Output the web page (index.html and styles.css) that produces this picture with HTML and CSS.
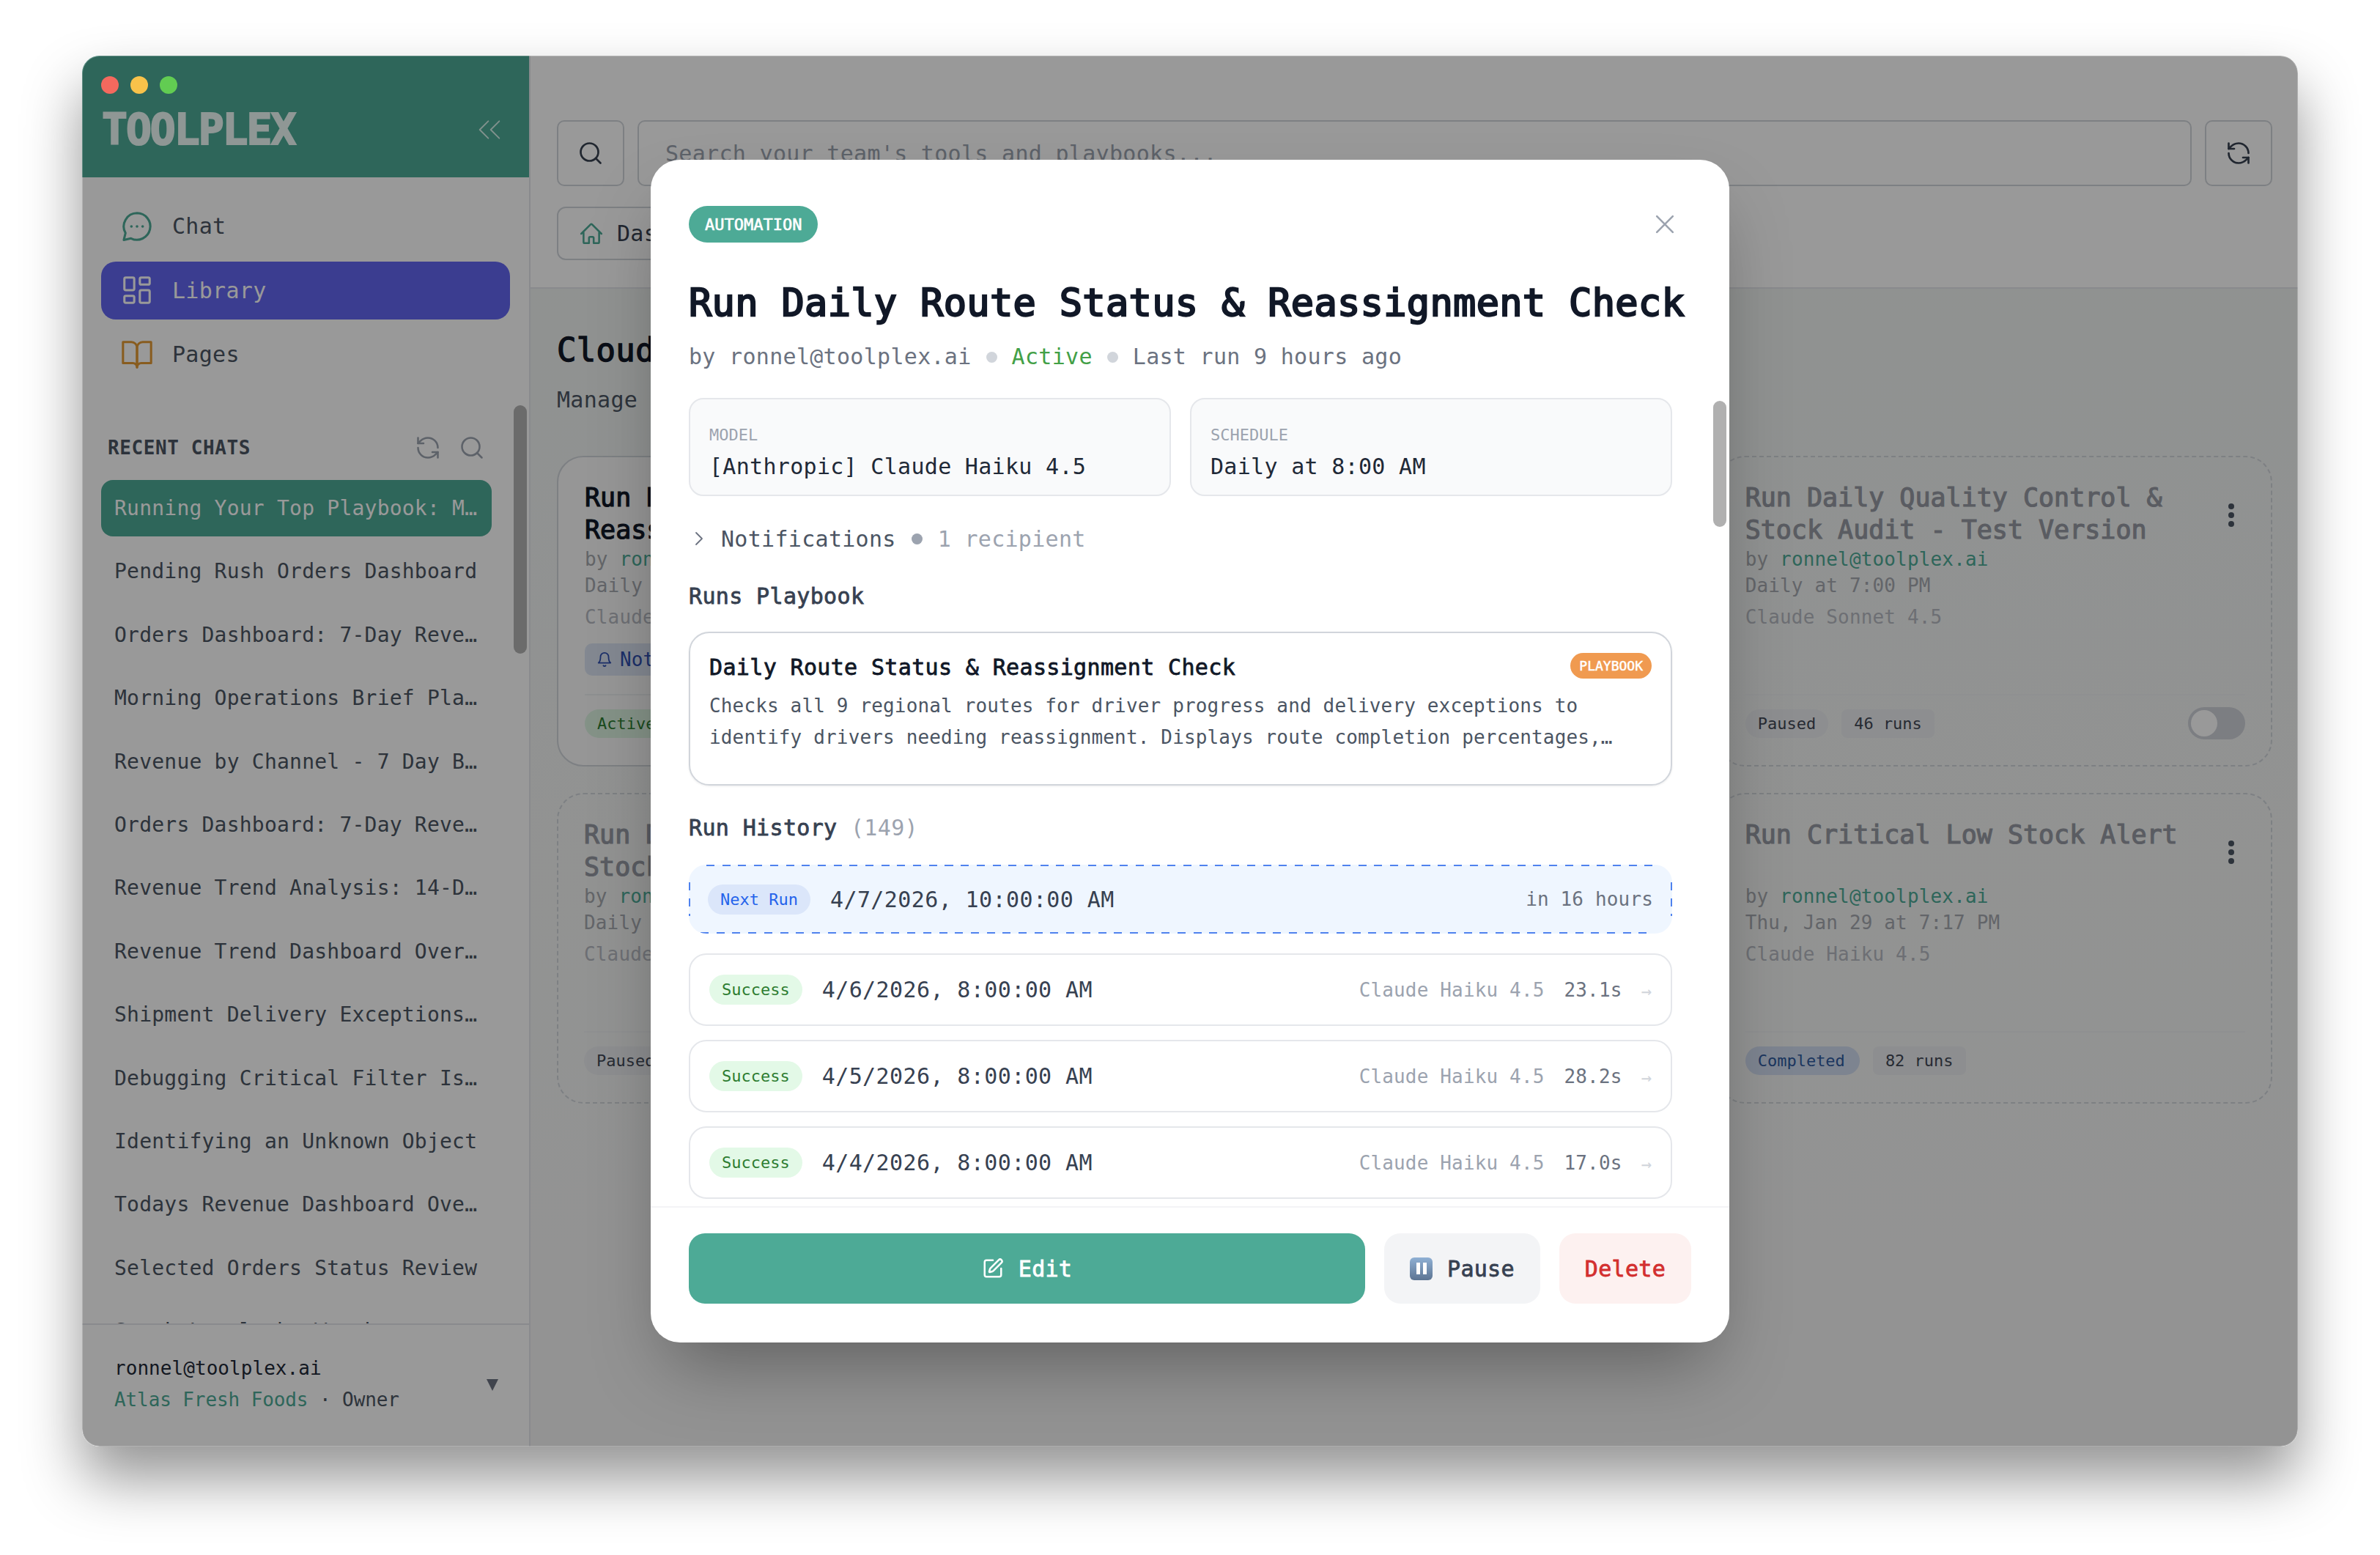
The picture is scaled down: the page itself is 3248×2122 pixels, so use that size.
FILE: index.html
```html
<!DOCTYPE html>
<html>
<head>
  <title>ToolPlex Library</title>
  <meta charset="UTF-8">
  <link rel="stylesheet" href="styles.css">
</head>

<body>
  <div class="window">
    <div class="traffic">
      <span class="light red"></span>
      <span class="light yellow"></span>
      <span class="light green"></span>
    </div>

    <aside class="sidebar">
      <div class="brand">
        <span class="logo">TOOLPLEX</span>
        <svg class="collapse" viewBox="0 0 24 24"><path d="m11 19-7-7 7-7"/><path d="m20 19-7-7 7-7"/></svg>
      </div>

      <nav class="nav">
        <a class="nav-item">
          <svg class="nav-icon teal" viewBox="0 0 24 24"><path d="M12 2.5a9.5 9.5 0 1 1-4.3 18L2.6 21.6l1.2-4.9A9.5 9.5 0 0 1 12 2.5z"/><path class="dots" d="M8 12h.01M12 12h.01M16 12h.01"/></svg>
          Chat
        </a>
        <a class="nav-item active">
          <svg class="nav-icon" viewBox="0 0 24 24"><rect x="3" y="3" width="7" height="9" rx="1"/><rect x="14" y="3" width="7" height="5" rx="1"/><rect x="14" y="12" width="7" height="9" rx="1"/><rect x="3" y="16" width="7" height="5" rx="1"/></svg>
          Library
        </a>
        <a class="nav-item">
          <svg class="nav-icon amber" viewBox="0 0 24 24"><path d="M2 3h6a4 4 0 0 1 4 4v14a3 3 0 0 0-3-3H2z"/><path d="M22 3h-6a4 4 0 0 0-4 4v14a3 3 0 0 1 3-3h7z"/></svg>
          Pages
        </a>
      </nav>

      <div class="recent-head">
        <span class="recent-title">RECENT CHATS</span>
        <span class="recent-tools">
          <svg class="small-icon refresh" viewBox="0 0 24 24"><path d="M21 12a9 9 0 0 0-9-9 9.75 9.75 0 0 0-6.74 2.74L3 8"/><path d="M3 3v5h5"/><path d="M3 12a9 9 0 0 0 9 9 9.75 9.75 0 0 0 6.74-2.74L21 16"/><path d="M16 16h5v5"/></svg>
          <svg class="small-icon" viewBox="0 0 24 24"><circle cx="11" cy="11" r="8"/><path d="m21 21-4.35-4.35"/></svg>
        </span>
      </div>

      <div class="chat-list">
        <div class="chat active">Running Your Top Playbook: M…</div>
        <div class="chat">Pending Rush Orders Dashboard</div>
        <div class="chat">Orders Dashboard: 7-Day Reve…</div>
        <div class="chat">Morning Operations Brief Pla…</div>
        <div class="chat">Revenue by Channel - 7 Day B…</div>
        <div class="chat">Orders Dashboard: 7-Day Reve…</div>
        <div class="chat">Revenue Trend Analysis: 14-D…</div>
        <div class="chat">Revenue Trend Dashboard Over…</div>
        <div class="chat">Shipment Delivery Exceptions…</div>
        <div class="chat">Debugging Critical Filter Is…</div>
        <div class="chat">Identifying an Unknown Object</div>
        <div class="chat">Todays Revenue Dashboard Ove…</div>
        <div class="chat">Selected Orders Status Review</div>
        <div class="chat">Stock Levels by Warehouse</div>
      </div>

      <div class="account">
        <div>
          <div class="account-mail">ronnel@toolplex.ai</div>
          <div class="account-org"><span class="org-name">Atlas Fresh Foods</span> · Owner</div>
        </div>
        <span class="caret"></span>
      </div>

      <div class="side-thumb"></div>
    </aside>

    <main class="main">
      <header class="topbar">
        <div class="search-row">
          <button class="icon-btn">
            <svg class="btn-icon" viewBox="0 0 24 24"><circle cx="11" cy="11" r="8"/><path d="m21 21-4.35-4.35"/></svg>
          </button>
          <input class="search" placeholder="Search your team's tools and playbooks...">
          <button class="icon-btn">
            <svg class="btn-icon" viewBox="0 0 24 24"><path d="M21 12a9 9 0 0 0-9-9 9.75 9.75 0 0 0-6.74 2.74L3 8"/><path d="M3 3v5h5"/><path d="M3 12a9 9 0 0 0 9 9 9.75 9.75 0 0 0 6.74-2.74L21 16"/><path d="M16 16h5v5"/></svg>
          </button>
        </div>
        <div class="tabs">
          <div class="tab">
            <svg class="tab-icon" viewBox="0 0 24 24"><path d="M2.25 12l8.954-8.955c.44-.439 1.152-.439 1.591 0L21.75 12M4.5 9.75v10.125c0 .621.504 1.125 1.125 1.125H9.75v-4.875c0-.621.504-1.125 1.125-1.125h2.25c.621 0 1.125.504 1.125 1.125V21h4.125c.621 0 1.125-.504 1.125-1.125V9.75"/></svg>
            Dashboard
          </div>
        </div>
      </header>

      <section class="content">
        <h1 class="page-title">Cloud Automations</h1>
        <p class="page-sub">Manage your scheduled automations</p>

        <div class="cards">
          <article class="card">
            <h3 class="card-title">Run Daily Route Status &amp; Reassignment Check</h3>
            <div class="card-by">by <span class="mail">ronnel@toolplex.ai</span></div>
            <div class="card-meta">Daily at 8:00 AM</div>
            <div class="card-meta model">Claude Haiku 4.5</div>
            <div class="notify">
              <svg class="bell" viewBox="0 0 24 24"><path d="M6 8a6 6 0 0 1 12 0c0 7 3 9 3 9H3s3-2 3-9"/><path d="M10.3 21a1.94 1.94 0 0 0 3.4 0"/></svg>
              Notifications
            </div>
            <div class="card-foot"><span class="chip chip-active">Active</span></div>
          </article>
          <article class="card"></article>
          <article class="card paused">
            <h3 class="card-title">Run Daily Quality Control &amp; Stock Audit - Test Version</h3>
            <span class="kebab"></span>
            <div class="card-by">by <span class="mail">ronnel@toolplex.ai</span></div>
            <div class="card-meta">Daily at 7:00 PM</div>
            <div class="card-meta model">Claude Sonnet 4.5</div>
            <div class="card-foot">
              <span class="chip">Paused</span>
              <span class="chip square">46 runs</span>
              <span class="toggle"><span class="knob"></span></span>
            </div>
          </article>

          <article class="card paused">
            <h3 class="card-title">Run Daily Quality Control &amp; Stock Audit</h3>
            <div class="card-by">by <span class="mail">ronnel@toolplex.ai</span></div>
            <div class="card-meta">Daily at 7:00 AM</div>
            <div class="card-meta model">Claude Haiku 4.5</div>
            <div class="card-foot"><span class="chip">Paused</span></div>
          </article>
          <article class="card paused"></article>
          <article class="card paused">
            <h3 class="card-title tall">Run Critical Low Stock Alert</h3>
            <span class="kebab"></span>
            <div class="card-by">by <span class="mail">ronnel@toolplex.ai</span></div>
            <div class="card-meta">Thu, Jan 29 at 7:17 PM</div>
            <div class="card-meta model">Claude Haiku 4.5</div>
            <div class="card-foot">
              <span class="chip chip-done">Completed</span>
              <span class="chip square">82 runs</span>
            </div>
          </article>
        </div>
      </section>
    </main>

    <div class="overlay">
      <div class="modal">
        <div class="modal-head">
          <div class="modal-top">
            <span class="type-badge">AUTOMATION</span>
            <svg class="close" viewBox="0 0 24 24"><path d="M2 2l20 20M22 2 2 22"/></svg>
          </div>
          <h2 class="modal-title">Run Daily Route Status &amp; Reassignment Check</h2>
          <div class="modal-sub">
            <span>by ronnel@toolplex.ai</span>
            <span class="dot"></span>
            <span class="status">Active</span>
            <span class="dot"></span>
            <span>Last run 9 hours ago</span>
          </div>
        </div>

        <div class="modal-body">
          <div class="info-grid">
            <div class="info-box">
              <div class="info-label">MODEL</div>
              <div class="info-value">[Anthropic] Claude Haiku 4.5</div>
            </div>
            <div class="info-box">
              <div class="info-label">SCHEDULE</div>
              <div class="info-value">Daily at 8:00 AM</div>
            </div>
          </div>

          <div class="notif-row">
            <svg class="chev" viewBox="0 0 12 20"><path d="M2 2l8 8-8 8"/></svg>
            <span class="notif-label">Notifications</span>
            <span class="dot dark"></span>
            <span class="notif-count">1 recipient</span>
          </div>

          <h4 class="section-title">Runs Playbook</h4>
          <div class="playbook">
            <div class="playbook-head">
              <span class="playbook-name">Daily Route Status &amp; Reassignment Check</span>
              <span class="playbook-badge">PLAYBOOK</span>
            </div>
            <p class="playbook-desc">Checks all 9 regional routes for driver progress and delivery exceptions to<br>identify drivers needing reassignment. Displays route completion percentages,…</p>
          </div>

          <h4 class="section-title history">Run History <span class="count">(149)</span></h4>

          <div class="run next">
            <span class="pill pill-next">Next Run</span>
            <span class="run-date">4/7/2026, 10:00:00 AM</span>
            <span class="run-eta">in 16 hours</span>
          </div>
          <div class="run">
            <span class="pill">Success</span>
            <span class="run-date">4/6/2026, 8:00:00 AM</span>
            <span class="run-model">Claude Haiku 4.5</span>
            <span class="run-time">23.1s</span>
            <span class="run-arrow">→</span>
          </div>
          <div class="run">
            <span class="pill">Success</span>
            <span class="run-date">4/5/2026, 8:00:00 AM</span>
            <span class="run-model">Claude Haiku 4.5</span>
            <span class="run-time">28.2s</span>
            <span class="run-arrow">→</span>
          </div>
          <div class="run">
            <span class="pill">Success</span>
            <span class="run-date">4/4/2026, 8:00:00 AM</span>
            <span class="run-model">Claude Haiku 4.5</span>
            <span class="run-time">17.0s</span>
            <span class="run-arrow">→</span>
          </div>
        </div>

        <div class="modal-thumb"></div>

        <div class="modal-foot">
          <button class="btn btn-edit">
            <svg class="edit-icon" viewBox="0 0 24 24"><path d="M12 3H5a2 2 0 0 0-2 2v14a2 2 0 0 0 2 2h14a2 2 0 0 0 2-2v-7"/><path d="M18.375 2.625a1 1 0 0 1 3 3l-9.013 9.014a2 2 0 0 1-.853.505l-2.873.84a.5.5 0 0 1-.62-.62l.84-2.873a2 2 0 0 1 .506-.852z"/></svg>
            Edit
          </button>
          <button class="btn btn-pause"><span class="pause-icon"><i></i><i></i></span>Pause</button>
          <button class="btn btn-delete">Delete</button>
        </div>
      </div>
    </div>
  </div>
</body>
</html>
```

FILE: styles.css
```css
* {
  box-sizing: border-box;
}
body {
  margin: 0;
  padding: 76px 112px 148px;
  background-color: #fff;
  font-family: "DejaVu Sans Mono", "Liberation Mono", monospace;
  font-size: 30px;
  letter-spacing: 0.3px;
  color: #1f2937;
}
svg {
  fill: none;
  stroke: currentColor;
  stroke-linecap: round;
  stroke-linejoin: round;
  stroke-width: 2;
  flex: none;
}
h1, h2, h3, h4, p {
  margin: 0;
}
button, input {
  font: inherit;
  letter-spacing: inherit;
}

.window {
  position: relative;
  display: flex;
  width: 3024px;
  height: 1898px;
  border-radius: 24px;
  overflow: hidden;
  background-color: #fff;
  box-shadow: 0 44px 80px rgba(0,0,0,0.42);
}

.traffic {
  position: absolute;
  top: 28px;
  left: 26px;
  z-index: 3;
  display: flex;
  gap: 16px;
}
.light {
  width: 24px;
  height: 24px;
  border-radius: 50%;
}
.red { background-color: #f4695e; }
.yellow { background-color: #f8c24a; }
.green { background-color: #62cc52; }

/* sidebar */
.sidebar {
  position: relative;
  display: flex;
  flex-direction: column;
  width: 612px;
  flex: none;
  border-right: 2px solid #e5e7eb;
  background-color: #fff;
}
.brand {
  display: flex;
  align-items: center;
  justify-content: space-between;
  height: 166px;
  padding: 36px 34px 0 27px;
  background-color: #4daa96;
}
.logo {
  font-size: 58px;
  font-weight: bold;
  letter-spacing: -2px;
  line-height: 58px;
  color: #eefcf8;
  -webkit-text-stroke: 2px #eefcf8;
}
.collapse {
  width: 40px;
  height: 40px;
  color: #d8f3ec;
  stroke-width: 1.1;
}
.nav {
  display: flex;
  flex-direction: column;
  gap: 8.5px;
  padding: 27px 26px 0;
}
.nav-item {
  display: flex;
  align-items: center;
  gap: 25px;
  height: 79px;
  padding-left: 26px;
  border-radius: 20px;
  color: #4b5563;
}
.nav-item.active {
  background-color: #6366f1;
  color: #fff;
}
.nav-icon {
  width: 46px;
  height: 46px;
  stroke-width: 1.6;
}
.nav-icon.teal { color: #4daa96; }
.nav-icon.amber { color: #e39a35; }
.nav-icon .dots {
  stroke-width: 1.9;
}
.recent-head {
  display: flex;
  align-items: center;
  justify-content: space-between;
  margin-top: 70px;
  padding: 0 60px 0 35px;
  height: 36px;
}
.recent-title {
  font-size: 26px;
  font-weight: bold;
  letter-spacing: 0.6px;
  color: #4b5563;
}
.recent-tools {
  display: flex;
  gap: 24px;
  align-items: center;
}
.small-icon {
  width: 36px;
  height: 36px;
  color: #9ca3af;
  stroke-width: 1.7;
}
.chat-list {
  flex: 1;
  min-height: 0;
  overflow: hidden;
  display: flex;
  flex-direction: column;
  gap: 9.4px;
  margin-top: 26px;
  padding: 0 51px 0 26px;
}
.chat {
  flex: none;
  height: 77px;
  line-height: 77px;
  padding-left: 18px;
  border-radius: 16px;
  font-size: 28px;
  letter-spacing: 0.22px;
  color: #4b5563;
  white-space: nowrap;
}
.chat.active {
  background-color: #4daa96;
  color: #fff;
}
.account {
  display: flex;
  align-items: center;
  justify-content: space-between;
  height: 168px;
  flex: none;
  padding: 0 42px 6px 44px;
  border-top: 2px solid #e5e7eb;
  font-size: 26px;
  line-height: 36px;
  letter-spacing: 0.05px;
}
.account-org {
  margin-top: 7px;
  color: #4b5563;
  letter-spacing: -0.1px;
}
.org-name {
  color: #4daa96;
}
.caret {
  width: 0;
  height: 0;
  margin-top: 4px;
  border-left: 8px solid transparent;
  border-right: 8px solid transparent;
  border-top: 16px solid #6b7280;
}
.side-thumb {
  position: absolute;
  top: 477px;
  left: 589px;
  width: 18px;
  height: 339px;
  border-radius: 9px;
  background-color: #b3b3b3;
}

/* main */
.main {
  display: flex;
  flex-direction: column;
  flex: 1;
  min-width: 0;
  background: linear-gradient(#eff3f1, #f6f6f6);
}
.topbar {
  padding: 88px 35px 37px 36px;
  border-bottom: 2px solid #e5e7eb;
  background-color: #fff;
}
.search-row {
  display: flex;
  gap: 18px;
}
.icon-btn {
  display: flex;
  align-items: center;
  justify-content: center;
  width: 92px;
  height: 90px;
  flex: none;
  padding: 0;
  border: 2px solid #d1d5db;
  border-radius: 10px;
  background-color: #fff;
  color: #374151;
}
.btn-icon {
  width: 36px;
  height: 36px;
  stroke-width: 1.8;
}
.search {
  flex: 1;
  min-width: 0;
  height: 90px;
  padding: 0 36px;
  border: 2px solid #d1d5db;
  border-radius: 10px;
}
.search::placeholder {
  color: #9ca3af;
}
.tabs {
  display: flex;
  margin-top: 28px;
}
.tab {
  display: flex;
  align-items: center;
  gap: 18px;
  height: 73px;
  padding: 0 28px;
  border: 2px solid #d1d5db;
  border-radius: 12px;
  color: #374151;
}
.tab-icon {
  width: 34px;
  height: 34px;
  color: #4daa96;
  stroke-width: 1.8;
}
.content {
  padding: 54px 35px 0 36px;
}
.page-title {
  font-size: 44px;
  line-height: 60px;
  font-weight: normal;
  -webkit-text-stroke: 1.4px #111827;
  color: #111827;
}
.page-sub {
  margin-top: 18px;
  line-height: 40px;
  color: #4b5563;
}
.cards {
  display: grid;
  grid-template-columns: repeat(3, 1fr);
  gap: 36px;
  margin-top: 56px;
}
.card {
  position: relative;
  display: flex;
  flex-direction: column;
  height: 424px;
  padding: 33px 35px 35px;
  border: 2px solid #d1d5db;
  border-radius: 36px;
  background-color: #fafbfb;
  font-size: 26px;
  letter-spacing: 0.15px;
}
.card:first-child {
  padding-left: 36px;
}
.card.paused {
  border-style: dashed;
  background-color: transparent;
}
.card-title {
  width: 640px;
  font-size: 35px;
  line-height: 44px;
  letter-spacing: 0;
  font-weight: normal;
  -webkit-text-stroke: 1.2px #111827;
  color: #111827;
}
.card-title.tall {
  min-height: 88px;
}
.paused .card-title {
  -webkit-text-stroke-color: #969aa3;
  color: #969aa3;
}
.card-by {
  line-height: 36px;
  color: #a5a8ad;
}
.mail {
  color: #4daa96;
}
.card-meta {
  line-height: 36px;
  color: #a5a8b0;
}
.card-meta.model {
  margin-top: 7px;
  color: #b6b9c1;
}
.notify {
  display: flex;
  align-items: center;
  gap: 10px;
  align-self: flex-start;
  height: 44px;
  margin-top: 18px;
  padding: 0 16px;
  border-radius: 10px;
  background-color: #dbe3f2;
  color: #2f4fb0;
  white-space: nowrap;
}
.bell {
  width: 22px;
  height: 22px;
}
.card-foot {
  display: flex;
  align-items: center;
  gap: 18px;
  min-height: 62px;
  margin-top: auto;
  padding-top: 16px;
  border-top: 2px solid #eceef0;
  font-size: 22px;
  letter-spacing: 0;
}
.paused .card-foot {
  border-top-color: #eef0f2;
}
.chip {
  display: flex;
  align-items: center;
  height: 39px;
  padding: 0 17px;
  border-radius: 20px;
  background-color: #ebedf0;
  color: #414956;
  white-space: nowrap;
}
.chip.square {
  border-radius: 8px;
}
.chip-active {
  background-color: #dcf3e2;
  color: #2e7d32;
}
.chip-done {
  padding-right: 20px;
  background-color: #d0dcf0;
  color: #2f5a9e;
}
.kebab {
  position: absolute;
  top: 63px;
  right: 50px;
  width: 8px;
  height: 8px;
  border-radius: 50%;
  background-color: #4b5563;
  box-shadow: 0 12px 0 #4b5563, 0 24px 0 #4b5563;
}
.toggle {
  display: flex;
  align-items: center;
  width: 78px;
  height: 44px;
  margin-left: auto;
  padding: 0 4px;
  border-radius: 22px;
  background-color: #cfd2d9;
}
.knob {
  width: 36px;
  height: 36px;
  border-radius: 50%;
  background-color: #fff;
}

/* modal */
.overlay {
  position: absolute;
  top: 0;
  left: 0;
  width: 100%;
  height: 100%;
  z-index: 2;
  display: flex;
  align-items: center;
  justify-content: center;
  background-color: rgba(0,0,0,0.4);
  box-shadow: inset 0 0 0 1px rgba(255,255,255,0.25);
  border-radius: 24px;
}
.modal {
  position: relative;
  display: flex;
  flex-direction: column;
  width: 1472px;
  height: 1614px;
  border-radius: 40px;
  background-color: #fff;
  box-shadow: 0 50px 100px -24px rgba(0,0,0,0.35);
  overflow: hidden;
}
.modal-head {
  flex: none;
  padding: 63px 52px 36px;
}
.modal-top {
  display: flex;
  align-items: center;
  justify-content: space-between;
  padding-right: 23px;
}
.type-badge {
  display: flex;
  align-items: center;
  height: 50px;
  padding: 0 22px;
  border-radius: 25px;
  background-color: #4daa96;
  color: #fff;
  font-size: 22px;
  letter-spacing: 0;
  -webkit-text-stroke: 0.6px #fff;
}
.close {
  width: 26px;
  height: 26px;
  color: #9ca3af;
  stroke-width: 2.4;
}
.modal-title {
  margin-top: 51px;
  font-size: 52px;
  line-height: 62px;
  letter-spacing: 0.3px;
  font-weight: normal;
  -webkit-text-stroke: 2.3px #111827;
  color: #111827;
  white-space: nowrap;
}
.modal-sub {
  display: flex;
  align-items: center;
  gap: 20px;
  margin-top: 23px;
  line-height: 40px;
  color: #6b7280;
}
.dot {
  width: 15px;
  height: 15px;
  border-radius: 50%;
  background-color: #d1d5db;
}
.dot.dark {
  background-color: #9ca3af;
}
.status {
  color: #43a047;
}
.modal-body {
  flex: 1;
  min-height: 0;
  overflow: hidden;
  padding: 0 78px 0 52px;
}
.info-grid {
  display: grid;
  grid-template-columns: 1fr 1fr;
  gap: 26px;
}
.info-box {
  height: 134px;
  padding: 35px 26px 0;
  border: 2px solid #e5e7eb;
  border-radius: 20px;
  background-color: #f9fafb;
}
.info-label {
  font-size: 22px;
  line-height: 28px;
  letter-spacing: 0;
  color: #9ca3af;
}
.info-value {
  margin-top: 9px;
  line-height: 40px;
  color: #1f2937;
}
.notif-row {
  display: flex;
  align-items: center;
  height: 40px;
  margin-top: 38px;
}
.chev {
  width: 12px;
  height: 20px;
  margin-left: 8px;
  color: #6b7280;
  stroke-width: 1.8;
}
.notif-label {
  margin-left: 24px;
  color: #4b5563;
}
.notif-row .dot {
  margin: 0 21px;
}
.notif-count {
  color: #9ca3af;
}
.section-title {
  margin-top: 39px;
  font-size: 30px;
  line-height: 40px;
  font-weight: normal;
  letter-spacing: 0.35px;
  -webkit-text-stroke: 0.8px #374151;
  color: #374151;
}
.section-title.history {
  margin-top: 38px;
}
.count {
  -webkit-text-stroke: 0;
  color: #9ca3af;
}
.playbook {
  height: 210px;
  margin-top: 28px;
  padding: 26px 26px 0;
  border: 2px solid #d1d5db;
  border-radius: 28px;
  box-shadow: 0 1px 3px rgba(0,0,0,0.08);
}
.playbook-head {
  display: flex;
  align-items: center;
  justify-content: space-between;
  height: 40px;
}
.playbook-name {
  letter-spacing: 0.35px;
  -webkit-text-stroke: 0.8px #111827;
  color: #111827;
}
.playbook-badge {
  display: flex;
  align-items: center;
  height: 35px;
  margin-top: -4px;
  padding: 0 12px;
  border-radius: 18px;
  background-color: #f09a50;
  color: #fff;
  font-size: 18px;
  letter-spacing: 0;
  -webkit-text-stroke: 0.5px #fff;
}
.playbook-desc {
  margin-top: 12px;
  font-size: 26px;
  line-height: 43px;
  letter-spacing: 0.15px;
  color: #4b5563;
}
.run {
  display: flex;
  align-items: center;
  height: 99px;
  margin-bottom: 19px;
  padding: 0 26px;
  border: 2px solid #e5e7eb;
  border-radius: 24px;
}
.run.next {
  height: 94px;
  margin-top: 30px;
  margin-bottom: 27px;
  padding: 0 26px;
  border: none;
  background:
    repeating-linear-gradient(90deg, #4f82ee 0 11px, transparent 11px 21.7px) 24px 0 / calc(100% - 48px) 2px no-repeat,
    repeating-linear-gradient(90deg, #4f82ee 0 11px, transparent 11px 21.7px) 16px 100% / calc(100% - 40px) 2px no-repeat,
    repeating-linear-gradient(180deg, #4f82ee 0 11px, transparent 11px 21.7px) 0 24px / 2px calc(100% - 48px) no-repeat,
    repeating-linear-gradient(180deg, #4f82ee 0 11px, transparent 11px 21.7px) 100% 24px / 2px calc(100% - 48px) no-repeat,
    #eff6ff;
}
.pill {
  display: flex;
  align-items: center;
  height: 41px;
  padding: 0 17px;
  border-radius: 21px;
  background-color: #e3f9e7;
  color: #2e7d32;
  font-size: 22px;
  letter-spacing: 0;
}
.pill-next {
  background-color: #dbe6fa;
  color: #2563eb;
}
.run-date {
  margin-left: 27px;
  letter-spacing: 0.4px;
  color: #374151;
}
.run-eta,
.run-model,
.run-time {
  font-size: 26px;
  letter-spacing: 0.15px;
}
.run-eta {
  margin-left: auto;
  color: #6b7280;
}
.run-model {
  margin-left: auto;
  color: #9ca3af;
}
.run-time {
  margin-left: 27px;
  color: #6b7280;
}
.run-arrow {
  margin-left: 26px;
  padding-top: 5px;
  font-size: 24px;
  letter-spacing: 0;
  color: #d1d5db;
}
.modal-thumb {
  position: absolute;
  top: 329px;
  right: 4px;
  width: 18px;
  height: 172px;
  border-radius: 9px;
  background-color: #b0b0b0;
}
.modal-foot {
  display: flex;
  gap: 26px;
  flex: none;
  padding: 35px 52px 53px;
  border-top: 2px solid #f3f4f6;
}
.btn {
  display: flex;
  align-items: center;
  justify-content: center;
  height: 96px;
  padding: 0 35px;
  border: none;
  border-radius: 22px;
  -webkit-text-stroke: 0.8px currentColor;
}
.btn-edit {
  flex: 1;
  gap: 20px;
  background-color: #4daa96;
  color: #fff;
}
.edit-icon {
  width: 30px;
  height: 30px;
}
.btn-pause {
  gap: 20px;
  background-color: #f3f4f6;
  color: #374151;
}
.btn-delete {
  background-color: #fdf1f0;
  color: #d32f2f;
}
.pause-icon {
  display: flex;
  align-items: center;
  justify-content: center;
  gap: 4px;
  width: 31px;
  height: 31px;
  border-radius: 6px;
  background: linear-gradient(#8fb0d4, #5c7492);
}
.pause-icon i {
  width: 5px;
  height: 16px;
  background-color: #fff;
}
```
